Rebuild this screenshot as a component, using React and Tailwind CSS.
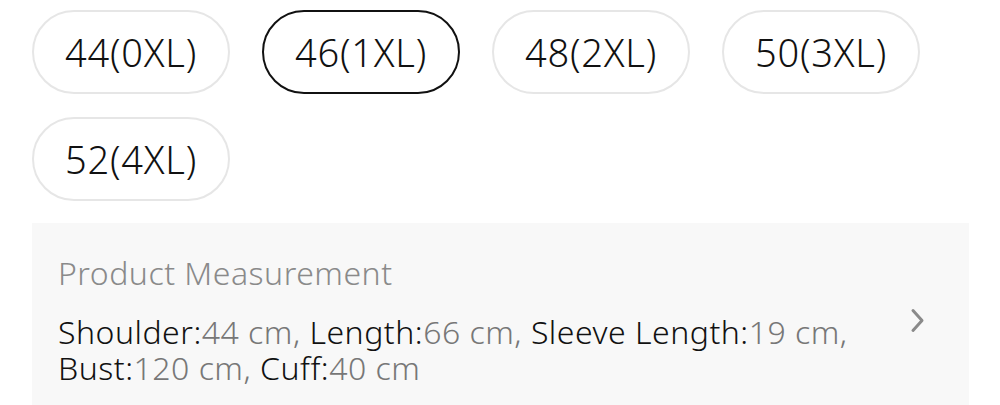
import React from "react";

const sizes = ["44(0XL)", "46(1XL)", "48(2XL)", "50(3XL)", "52(4XL)"];

export default function App() {
  return (
    <div className="w-[1000px] h-[405px] overflow-hidden bg-white" style={{ fontFamily: '"Noto Sans", sans-serif' }}>
      <div className="pl-[32px] pt-[10px] flex flex-wrap gap-x-[32px] gap-y-[23px] w-[960px]">
        {sizes.map((s, i) => (
          <div
            key={s}
            className={
              "w-[198px] h-[84px] rounded-full flex items-center justify-center text-[38px] leading-none text-[#111] font-[350] tracking-[0.8px] " +
              (i === 1 ? "border-[2.5px] border-[#111]" : "border-2 border-[#e6e6e6]")
            }
          >
            {s}
          </div>
        ))}
      </div>
      <div className="ml-[32px] mt-[22px] w-[937px] h-[200px] bg-[#f8f8f8] pl-[26px] pt-[32px] pr-[40px] flex">
        <div className="flex-1 font-[350]">
          <div className="text-[32px] leading-[36px] text-[#8a8a8a] tracking-[0.5px]">Product Measurement</div>
          <div className="mt-[23px] text-[32px] leading-[36px] text-[#111] whitespace-nowrap tracking-[0.5px]">
            Shoulder:<span className="text-[#777]">44 cm, </span>Length:<span className="text-[#777]">66 cm, </span>Sleeve Length:<span className="text-[#777]">19 cm,</span>
            <br />
            Bust:<span className="text-[#777]">120 cm, </span>Cuff:<span className="text-[#777]">40 cm</span>
          </div>
        </div>
        <div className="pt-[53px] pr-[2px]">
          <svg width="18" height="26" viewBox="0 0 18 26" fill="none">
            <path d="M4 2.5 L13 12.5 L4 22.5" stroke="#8a8a8a" strokeWidth="3" strokeLinecap="round" strokeLinejoin="round" />
          </svg>
        </div>
      </div>
    </div>
  );
}
